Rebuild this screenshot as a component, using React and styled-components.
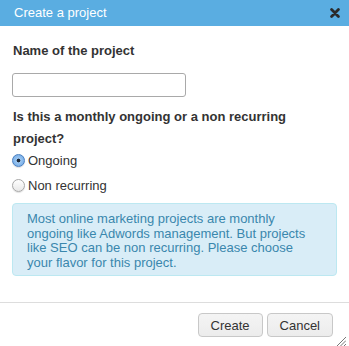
import styled, { createGlobalStyle } from "styled-components"

const GlobalStyle = createGlobalStyle`
    html, body {
        margin: 0;
        padding: 0;
        background: #fff;
    }
    body {
        font-family: "Liberation Sans", Arial, sans-serif;
        font-size: 13px;
        color: #333;
    }
`

export default function App() {
    return (
        <>
            <GlobalStyle />
            <Dialog>
                <TitleBar>
                    <Title>Create a project</Title>
                    <CloseIcon viewBox="0 0 10 10">
                        <path d="M1.6 1.6 L8.4 8.4 M8.4 1.6 L1.6 8.4" />
                    </CloseIcon>
                </TitleBar>

                <Body>
                    <Label>Name of the project</Label>
                    <TextInput type="text" />

                    <Question>Is this a monthly ongoing or a non recurring project?</Question>

                    <RadioRow>
                        <Radio checked />
                        <span>Ongoing</span>
                    </RadioRow>
                    <RadioRow>
                        <Radio />
                        <span>Non recurring</span>
                    </RadioRow>

                    <InfoBox>
                        Most online marketing projects are monthly ongoing like Adwords management.
                        But projects like SEO can be non recurring. Please choose your flavor for
                        this project.
                    </InfoBox>
                </Body>

                <Footer>
                    <Button>Create</Button>
                    <Button>Cancel</Button>
                </Footer>

                <Grip viewBox="0 0 10 10">
                    <path d="M10 1 L1 10 M10 4.5 L4.5 10 M10 8 L8 10" />
                </Grip>
            </Dialog>
        </>
    )
}

const Dialog = styled.div`
    position: relative;
    width: 349px;
    height: 346px;
    display: flex;
    flex-direction: column;
    background: #fff;
    overflow: hidden;
`

const TitleBar = styled.div`
    height: 26px;
    display: flex;
    align-items: center;
    justify-content: space-between;
    padding: 0 9px 0 14px;
    background: #5aade1;
`

const Title = styled.span`
    color: #fff;
    font-size: 13px;
    line-height: 16px;
`

const CloseIcon = styled.svg`
    width: 10px;
    height: 10px;
    path {
        stroke: #2b2b2b;
        stroke-width: 2.8;
        stroke-linecap: round;
        fill: none;
    }
`

const Body = styled.div`
    padding: 16px 12px 0;
    display: flex;
    flex-direction: column;
    align-items: flex-start;
`

const Label = styled.div`
    font-weight: 700;
    line-height: 18px;
    padding-left: 1px;
`

const TextInput = styled.input`
    box-sizing: border-box;
    margin: 13px 0 0;
    width: 174px;
    height: 24px;
    border: 1px solid #a9a9a9;
    border-radius: 3px;
    padding: 2px 6px;
    font-family: inherit;
    font-size: 13px;
    outline: none;
`

const Question = styled.div`
    font-weight: 700;
    line-height: 22px;
    margin: 9px 0 -2px;
    padding-left: 1px;
`

const RadioRow = styled.label`
    display: flex;
    align-items: center;
    gap: 3px;
    height: 25px;
    line-height: 16px;
`

const Radio = styled.span`
    box-sizing: border-box;
    width: 13px;
    height: 13px;
    border-radius: 50%;
    border: 1px solid ${p => (p.checked ? "#4a7fc0" : "#a8a8a8")};
    background: ${p =>
        p.checked
            ? "radial-gradient(circle at 50% 50%, #1e2a3a 0 1.6px, #9cc6f0 2.2px, #6aa6e6 100%)"
            : "linear-gradient(#ffffff, #e8e8e8)"};
    box-shadow: 0 1px 1px rgba(0, 0, 0, 0.12);
`

const InfoBox = styled.div`
    box-sizing: border-box;
    align-self: stretch;
    margin-top: 5px;
    padding: 8px 28px 4px 14px;
    min-height: 73px;
    background: #d9edf7;
    border: 1px solid #bce8f1;
    border-radius: 4px;
    color: #3a87ad;
    line-height: 14.6px;
`

const Footer = styled.div`
    margin-top: auto;
    border-top: 1px solid #dddddd;
    height: 44px;
    display: flex;
    justify-content: flex-end;
    align-items: flex-start;
    gap: 4px;
    padding: 10px 16px 0 0;
    box-sizing: border-box;
`

const Button = styled.button`
    box-sizing: border-box;
    height: 24px;
    min-width: 63px;
    padding: 0 12px;
    border: 1px solid #c8c8c8;
    border-radius: 4px;
    background: linear-gradient(#f4f4f4, #ececec);
    font-family: inherit;
    font-size: 13px;
    color: #333;
`

const Grip = styled.svg`
    position: absolute;
    right: 3px;
    bottom: 0;
    width: 10px;
    height: 10px;
    path {
        stroke: #555;
        stroke-width: 0.8;
        fill: none;
    }
`
